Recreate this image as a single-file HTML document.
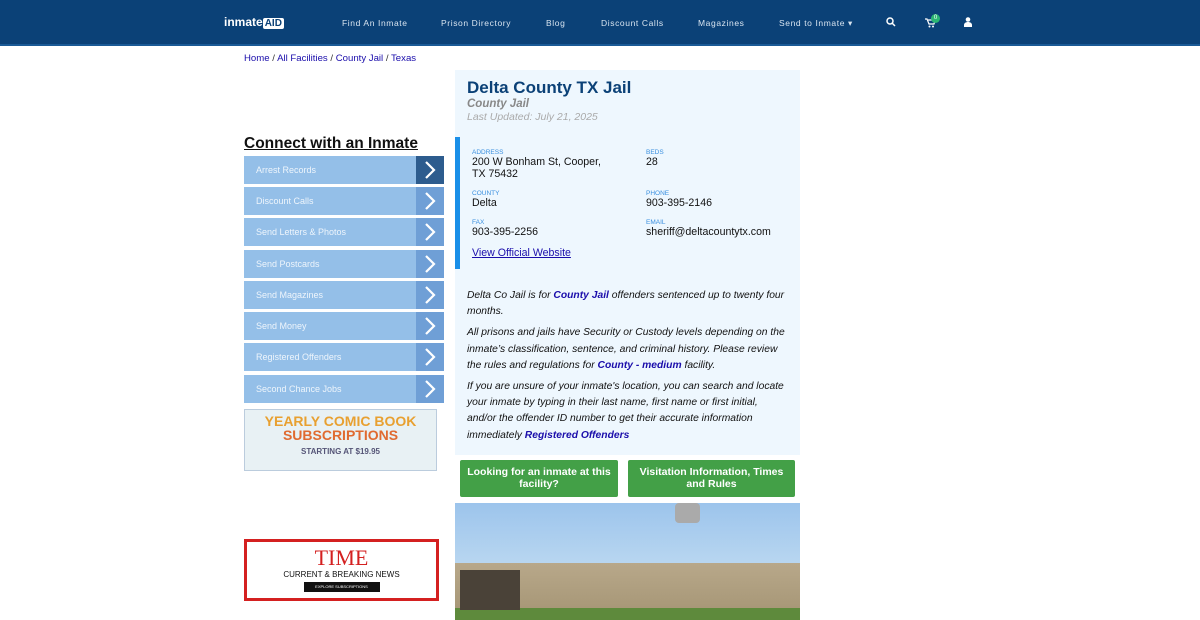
<!DOCTYPE html>
<html><head><meta charset="utf-8"><style>
*{margin:0;padding:0;box-sizing:border-box}
body{width:1200px;height:620px;overflow:hidden;background:#fff;font-family:"Liberation Sans",sans-serif;position:relative}
.nav{position:absolute;top:0;left:0;width:1200px;height:46px;background:#0b4177;border-bottom:2px solid #1a5a96}
.nav span{position:absolute;top:18px;color:#d8e4f0;font-size:8.5px;letter-spacing:.6px;white-space:nowrap}
.logo{position:absolute;left:224px;top:15px;color:#fff;font-size:12px;font-weight:bold;white-space:nowrap}
.logo i{font-style:normal;background:#fff;color:#0b4177;padding:0 2px;border-radius:2px;font-size:10px}
.bc{position:absolute;left:244px;top:53px;font-size:9.6px;color:#333}
.bc a{color:#1a0dab;text-decoration:none}
.side h2{position:absolute;left:244px;top:135px;font-size:15.5px;font-weight:bold;text-decoration:underline;color:#111}
.mi{position:absolute;left:244px;width:200px;height:28px;background:#94bfe8;color:#eef5fc;font-size:9px;line-height:28px;padding-left:12px}
.mi b{position:absolute;right:0;top:0;width:28px;height:28px;background:#6f9fd6}
.mi b svg{position:absolute;left:8px;top:5px}
.panel{position:absolute;left:455px;top:70px;width:345px;height:385px;background:#eef7fe}
h1{position:absolute;left:467px;top:78px;font-size:17px;color:#0b4177}
.sub{position:absolute;left:467px;font-style:italic;color:#888}
.bar{position:absolute;left:455px;top:137px;width:5px;height:132px;background:#1a8fe8}
.lab{position:absolute;font-size:6.5px;color:#3a8fdf}
.val{position:absolute;font-size:10.6px;color:#111;line-height:11.5px;white-space:nowrap}
.txt{position:absolute;left:467px;top:288px;width:322px;font-size:10.3px;line-height:16.2px;font-style:italic;color:#111}
.txt p{margin-bottom:5px}
.txt a{color:#1a0dab;font-weight:bold;text-decoration:none}
.btn{position:absolute;top:460px;height:37px;background:#43a047;color:#fff;font-size:10.5px;font-weight:bold;text-align:center;padding:7px 6px 0;line-height:11.5px;border-radius:2px}
</style></head><body>
<div class="nav">
<div class="logo">inmate<i>AID</i></div>
<span style="left:342px">Find An Inmate</span><span style="left:441px">Prison Directory</span><span style="left:546px">Blog</span><span style="left:601px">Discount Calls</span><span style="left:698px">Magazines</span><span style="left:779px">Send to Inmate ▾</span>
<svg style="position:absolute;left:886px;top:17px" width="10" height="10" viewBox="0 0 10 10"><circle cx="4" cy="4" r="3" fill="none" stroke="#fff" stroke-width="1.5"/><path d="M6 6l3 3" stroke="#fff" stroke-width="1.5"/></svg>
<svg style="position:absolute;left:925px;top:18px" width="10" height="10" viewBox="0 0 10 10"><path d="M0 1h2l2 5h5l1-4H3" fill="none" stroke="#fff" stroke-width="1.2"/><circle cx="4.5" cy="8.5" r="1" fill="#fff"/><circle cx="8" cy="8.5" r="1" fill="#fff"/></svg>
<span style="left:931px;top:14px;width:9px;height:9px;border-radius:50%;background:#2bb673;font-size:6px;text-align:center;line-height:9px;color:#fff;letter-spacing:0">0</span>
<svg style="position:absolute;left:964px;top:17px" width="8" height="10" viewBox="0 0 8 10"><circle cx="4" cy="2.5" r="2.3" fill="#fff"/><path d="M0 10v-2c0-2 2-3 4-3s4 1 4 3v2z" fill="#fff"/></svg>
</div>
<div class="bc"><a>Home</a> / <a>All Facilities</a> / <a>County Jail</a> / <a>Texas</a></div>
<div class="side"><h2>Connect with an Inmate</h2></div>
<div class="mi" style="top:156px">Arrest Records<b style="background:#2d5c8e"><svg width="12" height="18" viewBox="0 0 12 18"><path d="M2 1l8 8-8 8" fill="none" stroke="#fff" stroke-width="2.2"/></svg></b></div>
<div class="mi" style="top:187px">Discount Calls<b><svg width="12" height="18" viewBox="0 0 12 18"><path d="M2 1l8 8-8 8" fill="none" stroke="#fff" stroke-width="2.2"/></svg></b></div>
<div class="mi" style="top:218px">Send Letters &amp; Photos<b><svg width="12" height="18" viewBox="0 0 12 18"><path d="M2 1l8 8-8 8" fill="none" stroke="#fff" stroke-width="2.2"/></svg></b></div>
<div class="mi" style="top:250px">Send Postcards<b><svg width="12" height="18" viewBox="0 0 12 18"><path d="M2 1l8 8-8 8" fill="none" stroke="#fff" stroke-width="2.2"/></svg></b></div>
<div class="mi" style="top:281px">Send Magazines<b><svg width="12" height="18" viewBox="0 0 12 18"><path d="M2 1l8 8-8 8" fill="none" stroke="#fff" stroke-width="2.2"/></svg></b></div>
<div class="mi" style="top:312px">Send Money<b><svg width="12" height="18" viewBox="0 0 12 18"><path d="M2 1l8 8-8 8" fill="none" stroke="#fff" stroke-width="2.2"/></svg></b></div>
<div class="mi" style="top:343px">Registered Offenders<b><svg width="12" height="18" viewBox="0 0 12 18"><path d="M2 1l8 8-8 8" fill="none" stroke="#fff" stroke-width="2.2"/></svg></b></div>
<div class="mi" style="top:375px">Second Chance Jobs<b><svg width="12" height="18" viewBox="0 0 12 18"><path d="M2 1l8 8-8 8" fill="none" stroke="#fff" stroke-width="2.2"/></svg></b></div>
<div style="position:absolute;left:244px;top:409px;width:193px;height:62px;background:#e8f1f4;border:1px solid #bcd;text-align:center;font-weight:bold;color:#e8a030;font-size:14px;line-height:14px;padding-top:4px">YEARLY COMIC BOOK<br><span style="color:#e06a30">SUBSCRIPTIONS</span><br><span style="font-size:8px;color:#557">STARTING AT $19.95</span></div>
<div style="position:absolute;left:244px;top:539px;width:195px;height:62px;border:3px solid #d42020;text-align:center">
<div style="font-family:'Liberation Serif',serif;color:#d42020;font-size:22px;line-height:24px;margin-top:4px">TIME</div>
<div style="font-size:8px;color:#111">CURRENT &amp; BREAKING NEWS</div>
<div style="margin:3px auto 0;width:76px;height:10px;background:#111;color:#fff;font-size:4px;line-height:10px">EXPLORE SUBSCRIPTIONS</div></div>
<div class="panel"></div>
<h1>Delta County TX Jail</h1>
<div class="sub" style="top:98px;font-size:11.5px;font-weight:bold">County Jail</div>
<div class="sub" style="top:111px;font-size:10.5px;color:#aaa">Last Updated: July 21, 2025</div>
<div class="bar"></div>
<div class="lab" style="left:472px;top:149px">ADDRESS</div><div class="val" style="left:472px;top:157px">200 W Bonham St, Cooper,<br>TX 75432</div>
<div class="lab" style="left:646px;top:149px">BEDS</div><div class="val" style="left:646px;top:157px">28</div>
<div class="lab" style="left:472px;top:190px">COUNTY</div><div class="val" style="left:472px;top:198px">Delta</div>
<div class="lab" style="left:646px;top:190px">PHONE</div><div class="val" style="left:646px;top:198px">903-395-2146</div>
<div class="lab" style="left:472px;top:219px">FAX</div><div class="val" style="left:472px;top:227px">903-395-2256</div>
<div class="lab" style="left:646px;top:219px">EMAIL</div><div class="val" style="left:646px;top:227px">sheriff@deltacountytx.com</div>
<div class="val" style="left:472px;top:248px;color:#1a0dab;text-decoration:underline">View Official Website</div>
<div class="txt"><p>Delta Co Jail is for <a>County Jail</a> offenders sentenced up to twenty four months.</p><p>All prisons and jails have Security or Custody levels depending on the inmate’s classification, sentence, and criminal history. Please review the rules and regulations for <a>County - medium</a> facility.</p><p>If you are unsure of your inmate's location, you can search and locate your inmate by typing in their last name, first name or first initial, and/or the offender ID number to get their accurate information immediately <a>Registered Offenders</a></p></div>
<div class="btn" style="left:460px;width:158px">Looking for an inmate at this facility?</div>
<div class="btn" style="left:628px;width:167px">Visitation Information, Times and Rules</div>
<div style="position:absolute;left:455px;top:503px;width:345px;height:117px;background:linear-gradient(#9cc4ec 0,#b8d6f0 60px,#b8a88a 60px,#a89878 105px,#5e8a3c 105px)"></div>
<div style="position:absolute;left:460px;top:570px;width:60px;height:40px;background:#4a4238"></div>
<div style="position:absolute;left:675px;top:503px;width:25px;height:20px;background:#aaa;border-radius:4px"></div>
</body></html>
